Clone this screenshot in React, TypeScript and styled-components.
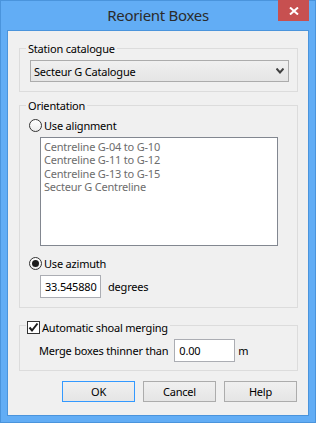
import React from "react";
import styled, { createGlobalStyle } from "styled-components";

const GlobalStyle = createGlobalStyle`
  html, body {
    margin: 0;
    padding: 0;
    background: #ffffff;
  }
  body {
    font-family: "Noto Sans", "Open Sans", sans-serif;
    font-size: 11px;
    letter-spacing: -0.2px;
    color: #000000;
  }
`;

const Window = styled.div`
  width: 316px;
  height: 423px;
  box-sizing: border-box;
  border: 1px solid #4a94dc;
  background: #62adf5;
  display: flex;
  flex-direction: column;
`;

const TitleBar = styled.div`
  height: 29px;
  display: flex;
  align-items: flex-start;
`;

const Title = styled.div`
  flex: 1;
  padding-left: 37px;
  text-align: center;
  font-size: 15px;
  letter-spacing: -0.3px;
  line-height: 29px;
  color: #2b2b2b;
`;

const CloseButton = styled.div`
  width: 31px;
  height: 21px;
  margin: -1px 6px 0 0;
  background: #c75050;
  display: flex;
  align-items: center;
  justify-content: center;
`;

const Client = styled.div`
  flex: 1;
  margin: 0 6px 6px 6px;
  border: 1px solid #4a94dc;
  background: #f0f0f0;
  display: flex;
  flex-direction: column;
  padding: 0 10px 0 11px;
`;

const Group = styled.div<{ $top: number; $bottom: number }>`
  margin-top: ${p => p.$top}px;
  border: 1px solid #dcdcdc;
  padding-bottom: ${p => p.$bottom}px;
  display: flex;
  flex-direction: column;
  align-items: flex-start;
`;

const GroupTitle = styled.div`
  margin: -8px 0 0 6px;
  padding: 0 2px;
  height: 15px;
  line-height: 15px;
  background: #f0f0f0;
  white-space: nowrap;
`;

const Combo = styled.div`
  margin: 4px 0 0 10px;
  width: 259px;
  height: 22px;
  box-sizing: border-box;
  border: 1px solid #acacac;
  background: linear-gradient(#f0f0f0, #e5e5e5);
  display: flex;
  align-items: center;
  justify-content: space-between;
  padding: 0 4px 0 3px;
`;

const OptionRow = styled.label<{ $top: number; $left: number }>`
  margin: ${p => p.$top}px 0 0 ${p => p.$left}px;
  height: 15px;
  line-height: 15px;
  display: flex;
  align-items: center;
  gap: 2px;
  white-space: nowrap;
`;

const CheckRow = styled(OptionRow)`
  background: #f0f0f0;
  padding: 0 2px 0 1px;
`;

const Radio = styled.span<{ $checked?: boolean }>`
  width: 13px;
  height: 13px;
  box-sizing: border-box;
  border: 1px solid #333333;
  border-radius: 50%;
  background: linear-gradient(#ffffff, #ececec);
  display: flex;
  align-items: center;
  justify-content: center;
  &::after {
    content: "";
    width: 7px;
    height: 7px;
    border-radius: 50%;
    background: #1c1c1c;
    display: ${p => (p.$checked ? "block" : "none")};
  }
`;

const CheckBox = styled.span`
  width: 13px;
  height: 13px;
  box-sizing: border-box;
  border: 1px solid #333333;
  background: #ffffff;
  display: flex;
  align-items: center;
  justify-content: center;
`;

const ListBox = styled.div`
  margin: 4px 0 0 20px;
  width: 238px;
  height: 109px;
  box-sizing: border-box;
  border: 1px solid #828790;
  background: #ffffff;
  padding: 2px 3px;
`;

const ListItem = styled.div`
  height: 13.4px;
  line-height: 13.4px;
  color: #6d6d6d;
  white-space: nowrap;
`;

const FieldRow = styled.div<{ $top: number; $left: number }>`
  margin: ${p => p.$top}px 0 0 ${p => p.$left}px;
  display: flex;
  align-items: center;
  white-space: nowrap;
`;

const Edit = styled.div<{ $width: number; $after: number }>`
  width: ${p => p.$width}px;
  height: 23px;
  box-sizing: border-box;
  border: 1px solid #abadb3;
  background: #ffffff;
  padding: 0 0 0 4px;
  line-height: 21px;
  overflow: hidden;
  margin-right: ${p => p.$after}px;
`;

const FieldText = styled.span<{ $gap?: number }>`
  margin-right: ${p => p.$gap ?? 0}px;
`;

const ButtonRow = styled.div`
  margin: 10px 1px 0 0;
  display: flex;
  justify-content: flex-end;
  gap: 8px;
`;

const Button = styled.div<{ $default?: boolean }>`
  width: 73px;
  height: 21px;
  box-sizing: border-box;
  border: 1px solid ${p => (p.$default ? "#3399ff" : "#acacac")};
  background: linear-gradient(#f0f0f0, #e5e5e5);
  display: flex;
  align-items: center;
  justify-content: center;
`;

const orientations = [
  "Centreline G-04 to G-10",
  "Centreline G-11 to G-12",
  "Centreline G-13 to G-15",
  "Secteur G Centreline",
];

const App: React.FC = () => {
  return (
    <>
      <GlobalStyle />
      <Window>
        <TitleBar>
          <Title>Reorient Boxes</Title>
          <CloseButton>
            <svg width="10" height="8" viewBox="0 0 10 8">
              <path d="M1 0.5 L9 7.5 M9 0.5 L1 7.5" stroke="#ffffff" strokeWidth="2" />
            </svg>
          </CloseButton>
        </TitleBar>
        <Client>
          <Group $top={17} $bottom={9}>
            <GroupTitle>Station catalogue</GroupTitle>
            <Combo>
              <span>Secteur G Catalogue</span>
              <svg width="8" height="6" viewBox="0 0 8 6">
                <path d="M0.5 0.5 L4 4.5 L7.5 0.5" stroke="#404040" strokeWidth="2" fill="none" />
              </svg>
            </Combo>
          </Group>

          <Group $top={13} $bottom={9}>
            <GroupTitle>Orientation</GroupTitle>
            <OptionRow $top={5} $left={9}>
              <Radio />
              <span>Use alignment</span>
            </OptionRow>
            <ListBox>
              {orientations.map(item => (
                <ListItem key={item}>{item}</ListItem>
              ))}
            </ListBox>
            <OptionRow $top={10} $left={9}>
              <Radio $checked />
              <span>Use azimuth</span>
            </OptionRow>
            <FieldRow $top={4} $left={20}>
              <Edit $width={61} $after={7}>33.545880</Edit>
              <FieldText>degrees</FieldText>
            </FieldRow>
          </Group>

          <Group $top={17} $bottom={8}>
            <CheckRow $top={-6} $left={6}>
              <CheckBox>
                <svg width="11" height="11" viewBox="0 0 11 11">
                  <path d="M1.5 5.5 L4 8.5 L9.5 1.5" stroke="#1c1c1c" strokeWidth="2" fill="none" />
                </svg>
              </CheckBox>
              <span>Automatic shoal merging</span>
            </CheckRow>
            <FieldRow $top={4} $left={19}>
              <FieldText $gap={6}>Merge boxes thinner than</FieldText>
              <Edit $width={61} $after={3}>0.00</Edit>
              <FieldText>m</FieldText>
            </FieldRow>
          </Group>

          <ButtonRow>
            <Button $default>OK</Button>
            <Button>Cancel</Button>
            <Button>Help</Button>
          </ButtonRow>
        </Client>
      </Window>
    </>
  );
};

export default App;
